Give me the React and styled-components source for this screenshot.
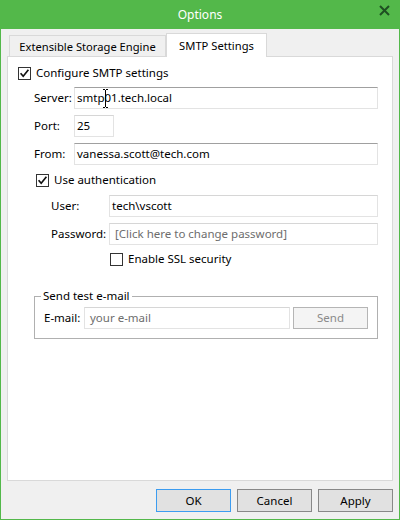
import React from "react";
import styled, { createGlobalStyle } from "styled-components";

const GREEN = "#53b84a";

const GlobalStyle = createGlobalStyle`
  html, body { margin: 0; padding: 0; background: #f0f0f0; }
  * { box-sizing: border-box; }
`;

const Window = styled.div`
  width: 400px;
  height: 520px;
  display: flex;
  flex-direction: column;
  background: #f0f0f0;
  color: #000;
  font-family: "Noto Sans", "Segoe UI", sans-serif;
  font-size: 11.5px;
`;

const TitleBar = styled.div`
  height: 29px;
  flex: none;
  background: ${GREEN};
  display: grid;
  grid-template-columns: 1fr auto 1fr;
  align-items: center;
`;

const Title = styled.div`
  grid-column: 2;
  color: #fff;
  font-size: 12px;
`;

const CloseButton = styled.div`
  grid-column: 3;
  justify-self: end;
  align-self: start;
  width: 30px;
  height: 20px;
  margin-right: 1px;
  display: flex;
  align-items: center;
  justify-content: center;
`;

const Body = styled.div`
  flex: 1;
  display: flex;
  flex-direction: column;
  border: 1px solid ${GREEN};
  border-top: 0;
  padding: 4px 6px 7px 6px;
`;

const TabStrip = styled.div`
  display: flex;
  align-items: flex-end;
  height: 23px;
  padding-left: 2px;
  position: relative;
  z-index: 1;
`;

const Tab = styled.div`
  width: ${(p) => p.$w}px;
  height: ${(p) => (p.$active ? 24 : 21)}px;
  margin-bottom: ${(p) => (p.$active ? -1 : 0)}px;
  background: ${(p) => (p.$active ? "#fff" : "#f0f0f0")};
  border: 1px solid #d9d9d9;
  border-bottom: none;
  display: flex;
  align-items: center;
  justify-content: center;
  font-size: 11.2px;
`;

const Panel = styled.div`
  flex: 1;
  background: #fff;
  border: 1px solid #d9d9d9;
  display: flex;
  flex-direction: column;
  padding-right: 14px;
`;

const CheckRow = styled.label`
  display: flex;
  align-items: center;
  gap: 5px;
  height: 13px;
  margin-top: ${(p) => p.$mt}px;
  margin-left: ${(p) => p.$indent}px;
`;

const Caption = styled.span`
  margin-bottom: 2px;
  white-space: nowrap;
`;

const Box = styled.span`
  width: 13px;
  height: 13px;
  flex: none;
  border: 1px solid #333;
  background: #fff;
  display: flex;
  align-items: center;
  justify-content: center;
`;

const FieldRow = styled.div`
  display: flex;
  align-items: center;
  height: 22px;
  margin-top: ${(p) => p.$mt}px;
  margin-left: ${(p) => p.$indent}px;
`;

const Label = styled.span`
  width: ${(p) => p.$w}px;
  flex: none;
  white-space: nowrap;
  margin-bottom: 1px;
`;

const TextBox = styled.div`
  position: relative;
  height: 22px;
  ${(p) => (p.$w ? `width: ${p.$w}px; flex: none;` : "flex: 1;")}
  border: 1px solid #e3e3e3;
  border-top-color: ${(p) => (p.$strong ? "#a0a0a0" : "#d6d6d6")};
  background: #fff;
  padding: 0 0 1px ${(p) => (p.$placeholder ? 5 : 2)}px;
  display: flex;
  align-items: center;
  color: ${(p) => (p.$placeholder ? "#6d6d6d" : "#000")};
  white-space: nowrap;
  overflow: hidden;
`;

const IBeam = styled.svg`
  position: absolute;
  left: 28px;
  top: 1px;
`;

const Group = styled.fieldset`
  margin: 22px 0 0 26px;
  border: 1px solid #b0b0b0;
  padding: 3px 9px 9px 9px;
  min-width: 0;
`;

const Legend = styled.legend`
  padding: 0 2px;
  margin-left: -3px;
  line-height: 16px;
`;

const GroupRow = styled.div`
  display: flex;
  align-items: center;
  height: 22px;
`;

const SendButton = styled.div`
  width: 75px;
  height: 22px;
  margin-left: 3px;
  flex: none;
  background: #f4f4f4;
  border: 1px solid #b5b5b5;
  color: #8a8a8a;
  display: flex;
  align-items: center;
  justify-content: center;
  padding-bottom: 1px;
`;

const Footer = styled.div`
  display: flex;
  justify-content: flex-end;
  gap: 6px;
  margin-top: 8px;
`;

const Button = styled.div`
  width: 75px;
  height: 23px;
  background: #e1e1e1;
  border: 1px solid ${(p) => (p.$default ? "#3c9cf0" : "#888")};
  display: flex;
  align-items: center;
  justify-content: center;
  padding-bottom: 1px;
`;

function Check({ checked }) {
  return (
    <Box>
      {checked && (
        <svg width="11" height="11" viewBox="0 0 11 11">
          <path d="M1.6 5.2 L4.2 8.2 L9.4 1.8" fill="none" stroke="#111" strokeWidth="1.7" />
        </svg>
      )}
    </Box>
  );
}

export default function App() {
  return (
    <>
      <GlobalStyle />
      <Window>
        <TitleBar>
          <Title>Options</Title>
          <CloseButton>
            <svg width="11" height="11" viewBox="0 0 11 11">
              <path d="M1 1 L10 10 M10 1 L1 10" stroke="#1f4f22" strokeWidth="2" />
            </svg>
          </CloseButton>
        </TitleBar>
        <Body>
          <TabStrip>
            <Tab $w={157}>Extensible Storage Engine</Tab>
            <Tab $w={101} $active>SMTP Settings</Tab>
          </TabStrip>
          <Panel>
            <CheckRow $mt={10} $indent={10}>
              <Check checked />
              <Caption>Configure SMTP settings</Caption>
            </CheckRow>
            <FieldRow $mt={7} $indent={26}>
              <Label $w={40}>Server:</Label>
              <TextBox $strong>
                smtp01.tech.local
                <IBeam width="5" height="19" viewBox="0 0 5 19">
                  <path d="M0 0.5 H2 M3 0.5 H5 M2.5 1 V18 M0 18.5 H2 M3 18.5 H5" stroke="#000" strokeWidth="1" />
                </IBeam>
              </TextBox>
            </FieldRow>
            <FieldRow $mt={6} $indent={26}>
              <Label $w={40}>Port:</Label>
              <TextBox $w={40}>25</TextBox>
            </FieldRow>
            <FieldRow $mt={6} $indent={26}>
              <Label $w={40}>From:</Label>
              <TextBox $strong>vanessa.scott@tech.com</TextBox>
            </FieldRow>
            <CheckRow $mt={9} $indent={28}>
              <Check checked />
              <Caption>Use authentication</Caption>
            </CheckRow>
            <FieldRow $mt={8} $indent={43}>
              <Label $w={58}>User:</Label>
              <TextBox>tech\vscott</TextBox>
            </FieldRow>
            <FieldRow $mt={6} $indent={43}>
              <Label $w={58}>Password:</Label>
              <TextBox $placeholder>[Click here to change password]</TextBox>
            </FieldRow>
            <CheckRow $mt={8} $indent={102}>
              <Check />
              <Caption>Enable SSL security</Caption>
            </CheckRow>
            <Group>
              <Legend>Send test e-mail</Legend>
              <GroupRow>
                <Label $w={40}>E-mail:</Label>
                <TextBox $w={206} $placeholder>your e-mail</TextBox>
                <SendButton>Send</SendButton>
              </GroupRow>
            </Group>
          </Panel>
          <Footer>
            <Button $default>OK</Button>
            <Button>Cancel</Button>
            <Button>Apply</Button>
          </Footer>
        </Body>
      </Window>
    </>
  );
}
